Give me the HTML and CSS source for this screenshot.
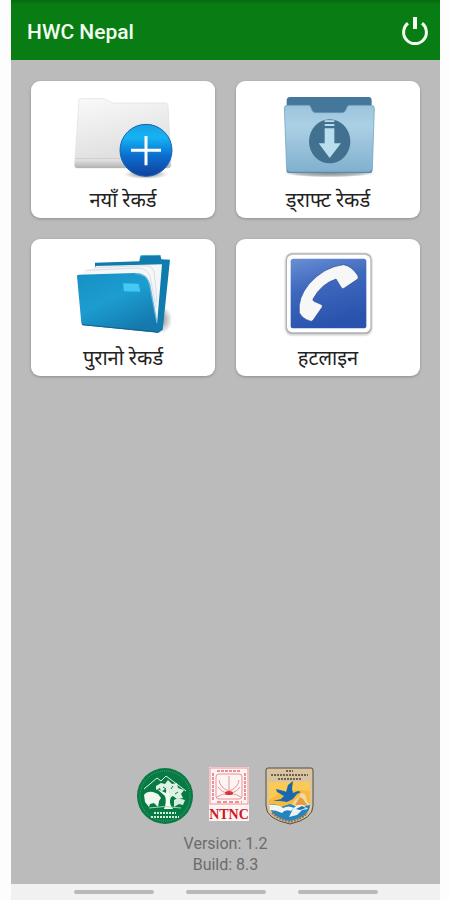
FILE: index.html
```html
<!DOCTYPE html>
<html lang="ne">
<head>
    <meta charset="UTF-8">
    <meta name="viewport" content="width=device-width, initial-scale=1.0">
    <title>HWC Nepal</title>
    <link rel="stylesheet" href="styles.css">
</head>
<body>

    <div class="app">
        <header class="app-bar">
            <h1>HWC Nepal</h1>
            <button type="button" class="power-btn" aria-label="Log out">
                <svg viewBox="0 0 30 32" width="30" height="32" fill="none" stroke="#f4fff2" stroke-width="3">
                    <path d="M15 1v12" stroke-width="4"/>
                    <path d="M8 7.2a11.4 11.4 0 1 0 14 0"/>
                </svg>
            </button>
        </header>

        <main class="menu">
            <!-- New record -->
            <a href="#new" class="card">
                <svg class="card-icon" viewBox="114 36 360 294">
                    <defs>
                        <linearGradient id="paper" x1="0" y1="0" x2="0.3" y2="1">
                            <stop offset="0" stop-color="#fafafa"/>
                            <stop offset="1" stop-color="#dcdcdc"/>
                        </linearGradient>
                        <linearGradient id="ball" x1="0" y1="0" x2="0" y2="1">
                            <stop offset="0" stop-color="#1b9fe0"/>
                            <stop offset="0.25" stop-color="#14b4f4"/>
                            <stop offset="0.6" stop-color="#0b6fd0"/>
                            <stop offset="1" stop-color="#123f9c"/>
                        </linearGradient>
                        <radialGradient id="ballShadow">
                            <stop offset="0" stop-color="#444" stop-opacity="0.7"/>
                            <stop offset="1" stop-color="#444" stop-opacity="0"/>
                        </radialGradient>
                        <linearGradient id="edge" x1="0" y1="0" x2="0" y2="1">
                            <stop offset="0" stop-color="#e6e6e6"/>
                            <stop offset="1" stop-color="#b2b2b2"/>
                        </linearGradient>
                    </defs>
                    <path d="M162 75q0-4 5-4h68q6 0 11 4l18 9h158q7 0 7 7l9 180q0 8-8 8H156q-7 0-7-8z" fill="url(#paper)" stroke="#dedede" stroke-width="2"/>
                    <path d="M150 252h286l1 18q0 9-8 9H156q-7 0-7-9z" fill="url(#edge)"/>
                    <path d="M150 251h286" stroke="#c4c4c4" stroke-width="2"/>
                    <ellipse cx="363" cy="298" rx="66" ry="14" fill="url(#ballShadow)"/>
                    <circle cx="363" cy="226" r="78" fill="url(#ball)" stroke="#1763b4" stroke-width="3"/>
                    <path d="M363 183v88M318 226h90" stroke="#fff" stroke-width="9"/>
                </svg>
                <span class="card-label">नयाँ रेकर्ड</span>
            </a>

            <!-- Draft record -->
            <a href="#draft" class="card">
                <svg class="card-icon" viewBox="114 36 360 294">
                    <defs>
                        <linearGradient id="steel" x1="0" y1="0" x2="0" y2="1">
                            <stop offset="0" stop-color="#9bc4dc"/>
                            <stop offset="0.3" stop-color="#abd0e5"/>
                            <stop offset="1" stop-color="#7fb0ce"/>
                        </linearGradient>
                        <radialGradient id="floor">
                            <stop offset="0" stop-color="#555" stop-opacity="0.7"/>
                            <stop offset="0.7" stop-color="#555" stop-opacity="0.4"/>
                            <stop offset="1" stop-color="#555" stop-opacity="0"/>
                        </radialGradient>
                    </defs>
                    <ellipse cx="298" cy="294" rx="138" ry="13" fill="url(#floor)"/>
                    <path d="M170 120V77q0-11 10-11h236q9 0 9 11v43z" fill="#44779a"/>
                    <path d="M163 99q0-8 9-8h64q5 0 6 5l4 10q3 7 10 7h81q7 0 10-7l4-10q2-5 7-5h66q9 0 9 9l-6 184q0 9-9 9H179q-9 0-9-9z" fill="url(#steel)" stroke="#6998b5" stroke-width="2"/>
                    <path d="M171 286q1 6 8 6h237q8 0 9-6" fill="none" stroke="#5b8bab" stroke-width="4"/>
                    <ellipse cx="299" cy="199" rx="62" ry="66" fill="#41718f"/>
                    <path d="M284 136h29v5h-29zM284 147h29v6h-29zM284 160h29v45h20l-34 44-33-44h18z" fill="#b9deee"/>
                </svg>
                <span class="card-label">ड्राफ्ट रेकर्ड</span>
            </a>

            <!-- Old records -->
            <a href="#old" class="card">
                <svg class="card-icon" viewBox="114 38 360 294">
                    <defs>
                        <linearGradient id="cover" x1="0" y1="0" x2="0.6" y2="1">
                            <stop offset="0" stop-color="#168fc4"/>
                            <stop offset="0.5" stop-color="#1c9dd0"/>
                            <stop offset="1" stop-color="#1579ae"/>
                        </linearGradient>
                        <radialGradient id="side">
                            <stop offset="0" stop-color="#555" stop-opacity="0.7"/>
                            <stop offset="1" stop-color="#555" stop-opacity="0"/>
                        </radialGradient>
                    </defs>
                    <ellipse cx="408" cy="262" rx="34" ry="42" fill="url(#side)"/>
                    <path d="M210 91l133-4 3-17 60-2 3 13 26 1-22 211-15 9-189-60z" fill="#107bad"/>
                    <path d="M345 77l4-7 55-1" fill="none" stroke="#3eb1dc" stroke-width="3"/>
                    <path d="M172 126q2-12 16-14l20-5 5-6 198-5-14 170-60-110z" fill="#f4f6f7"/>
                    <path d="M184 114l150-7q34-1 42 28l17 90M208 106l150-6q29 0 30 25l8 85" fill="none" stroke="#d9dfe3" stroke-width="3"/>
                    <path d="M156 131q0-4 5-4l168-5q37 0 45 33l22 118 9 19q2 8-7 9l-223-22q-5-1-6-6z" fill="url(#cover)"/>
                    <path d="M330 123q36 1 44 33l22 116" fill="none" stroke="#71bbd9" stroke-width="4"/>
                    <path d="M171 277l226 22" stroke="#10638e" stroke-width="3"/>
                    <path d="M294 153l47 1 5 24-49-1z" fill="#45c8f4"/>
                </svg>
                <span class="card-label">पुरानो रेकर्ड</span>
            </a>

            <!-- Hotline -->
            <a href="#hotline" class="card">
                <svg class="card-icon" viewBox="114 38 360 294">
                    <defs>
                        <linearGradient id="blue" x1="0" y1="0" x2="0.3" y2="1">
                            <stop offset="0" stop-color="#6a8fd5"/>
                            <stop offset="0.45" stop-color="#3e68bd"/>
                            <stop offset="1" stop-color="#2a53ae"/>
                        </linearGradient>
                    </defs>
                    <rect x="163" y="60" width="266" height="252" rx="24" fill="#e6e6e6"/>
                    <rect x="167" y="63" width="258" height="243" rx="20" fill="#b4b4b4"/>
                    <rect x="171" y="67" width="250" height="233" rx="17" fill="#fff"/>
                    <rect x="182" y="79" width="227" height="209" rx="8" fill="url(#blue)"/>
                    <path d="M341 97q24 4 42 32 4 8-1 12l-40 27q-5 2-8-2l-16-26q-44 14-69 60-1 5 3 7l23 10q4 3 1 8l-27 39q-4 4-9 2-23-7-32-25-6-43 29-86 46-52 104-58z" fill="#f7f7f7" stroke="#2d4f96" stroke-width="2"/>
                </svg>
                <span class="card-label">हटलाइन</span>
            </a>
        </main>

        <footer class="about">
            <div class="logos">
                <!-- National parks department -->
                <svg class="logo" viewBox="0 0 56 58" width="56" height="58">
                    <circle cx="28" cy="29" r="28" fill="#087a43"/>
                    <circle cx="28" cy="29" r="25" fill="none" stroke="#4fa67b" stroke-width="1" stroke-dasharray="1 1"/>
                    <path d="M7 22L20 11l4 3 5-5 20 15" fill="none" stroke="#e4f3e9" stroke-width="1"/>
                    <path d="M27 42q3-7 1-13l-8-7 9 4 1-8 3 8 8-5-7 9q-3 6 2 12z" fill="#f4fff6"/>
                    <path d="M19 19l5-3 4 1 3-4 4 4 5-1 1 5 6 2-3 4 2 4-6 1-4-3-4 2 1-6-5-3-4 3-1-4-4 2z" fill="#dff1e5"/>
                    <path d="M26 20l3 2M36 19l-2 3M41 25l-3 2" stroke="#087a43" stroke-width="1"/>
                    <path d="M7 28q3-4 9-3l5 2 3 4-2 3-1 6-4-4-4 1-1 3-4-5z" fill="#eef9f0"/>
                    <path d="M37 33l4-2 7 2-2 5-4-1-5 3z" fill="#d5edde"/>
                    <path d="M12 41q15-3 32 0" fill="none" stroke="#a5d3b8" stroke-width="1"/>
                    <path d="M17 46h22M14 50h28" stroke="#d6ebde" stroke-width="2" stroke-dasharray="2 1"/>
                </svg>

                <!-- NTNC -->
                <svg class="logo" viewBox="0 0 40 54" width="40" height="54">
                    <rect width="40" height="54" fill="#fdf4f4"/>
                    <g fill="none" stroke="#eb9298" stroke-width="1">
                        <rect x="1" y="1" width="38" height="36"/>
                        <rect x="7" y="7" width="26" height="25" rx="3"/>
                        <path d="M8 4h24" stroke-width="2" stroke-dasharray="3 1"/>
                        <path d="M4 6v28M36 6v28" stroke-width="2" stroke-dasharray="3 1"/>
                        <path d="M20 9v15M10 13q1 8 10 11 9-3 10-11M9 20q4 6 11 6 7 0 11-6"/>
                        <path d="M8 30q5-4 12-3 7-1 12 3"/>
                        <path d="M8 35h25" stroke-width="2" stroke-dasharray="4 2"/>
                    </g>
                    <ellipse cx="20" cy="26" rx="4" ry="2" fill="#d8343c"/>
                    <text class="ntnc" x="20" y="52" text-anchor="middle">NTNC</text>
                </svg>

                <!-- Fish and wildlife service -->
                <svg class="logo" viewBox="0 0 49 58" width="49" height="58">
                    <path d="M3 1h43q2 0 2 2v36q0 13-23 18Q1 52 1 39V3q0-2 2-2z" fill="#d8c4a0" stroke="#594a3c" stroke-width="1"/>
                    <path d="M21 4h7M6 8h37M13 12h23" stroke="#6f6250" stroke-width="2" stroke-dasharray="2 1"/>
                    <path d="M4 15h41v24q-1 10-20 15Q5 49 4 39z" fill="#f8b93c"/>
                    <path d="M4 15h41v9q-20-4-41 9z" fill="#fbc956"/>
                    <path d="M26 40l4-7 4-3 2-4 4 1 2 7 3 4v5H26z" fill="#ecd9a6"/>
                    <path d="M30 38l5-8 3 2 4 6z" fill="#e79a3b"/>
                    <!-- flying duck -->
                    <path d="M8 34l8-2 3-3-7-4-1-3 8 2 2 1 2-7 5-4-1 8 1 4 5-2 3 1-4 2-4 5-6 3-7-1z" fill="#1768ad"/>
                    <!-- water and fish -->
                    <path d="M4 38q7-2 12 2l9-3 8 3 12-2q0 11-20 16Q6 50 4 38z" fill="#2384c0"/>
                    <path d="M4 38q9-1 14 3 6-3 11 0l-3 3q-6-2-9 2-6-3-12-3z" fill="#f1f6f5"/>
                    <path d="M28 42q4-5 10-4l5 4-6 1-5 5-8 2z" fill="#eaf2f2"/>
                    <path d="M31 42l6-3 4 2-6 2z" fill="#2c6e9f"/>
                    <path d="M7 46q6 6 18 9 12-3 17-9" fill="none" stroke="#8a7354" stroke-width="2" stroke-dasharray="2 1"/>
                </svg>
            </div>
            <p>Version: 1.2</p>
            <p>Build: 8.3</p>
        </footer>

        <div class="nav-bar">
            <span></span>
            <span></span>
            <span></span>
        </div>
    </div>

</body>
</html>
```
FILE: styles.css
```css
* {
    margin: 0;
    padding: 0;
    box-sizing: border-box;
}

body {
    font-family: Roboto, 'Noto Sans', 'Noto Sans Devanagari', sans-serif;
    background-color: #fdfdfd;
    padding: 0 10px 0 11px;
}

.app {
    display: flex;
    flex-direction: column;
    min-height: 100vh;
    background-color: #bbb;
}

.app-bar {
    display: flex;
    justify-content: space-between;
    align-items: center;
    height: 60px;
    padding: 3px 10px 0 16px;
    background: linear-gradient(#08670f, #087d14 4px);
}

.app-bar h1 {
    color: #f4fff2;
    font-size: 21px;
    font-weight: 500;
}

.power-btn {
    display: flex;
    border: none;
    background: transparent;
    cursor: pointer;
}

.menu {
    display: grid;
    grid-template-columns: 1fr 1fr;
    gap: 21px;
    padding: 21px 20px;
}

.card {
    display: flex;
    flex-direction: column;
    align-items: center;
    padding: 6px 0 3px;
    border-radius: 9px;
    background-color: #fff;
    box-shadow: 0 1px 3px rgba(0, 0, 0, 0.25);
    color: #222;
    text-decoration: none;
}

.card-icon {
    width: 120px;
    height: 98px;
}

.card-label {
    font-size: 20px;
    line-height: 30px;
}

.about {
    margin-top: auto;
    padding-bottom: 9px;
    color: #6c6c6c;
    font-size: 16px;
    line-height: 21px;
    text-align: center;
}

.logos {
    display: flex;
    justify-content: center;
    gap: 16px;
    margin-bottom: 8px;
}

.ntnc {
    font-family: 'Liberation Serif', serif;
    font-size: 14px;
    font-weight: bold;
    fill: #d3141d;
}

.nav-bar {
    display: flex;
    justify-content: center;
    align-items: center;
    gap: 32px;
    height: 16px;
    background-color: #f1f1f1;
}

.nav-bar span {
    width: 80px;
    height: 4px;
    border-radius: 2px;
    background-color: #b9b9b9;
}
```
